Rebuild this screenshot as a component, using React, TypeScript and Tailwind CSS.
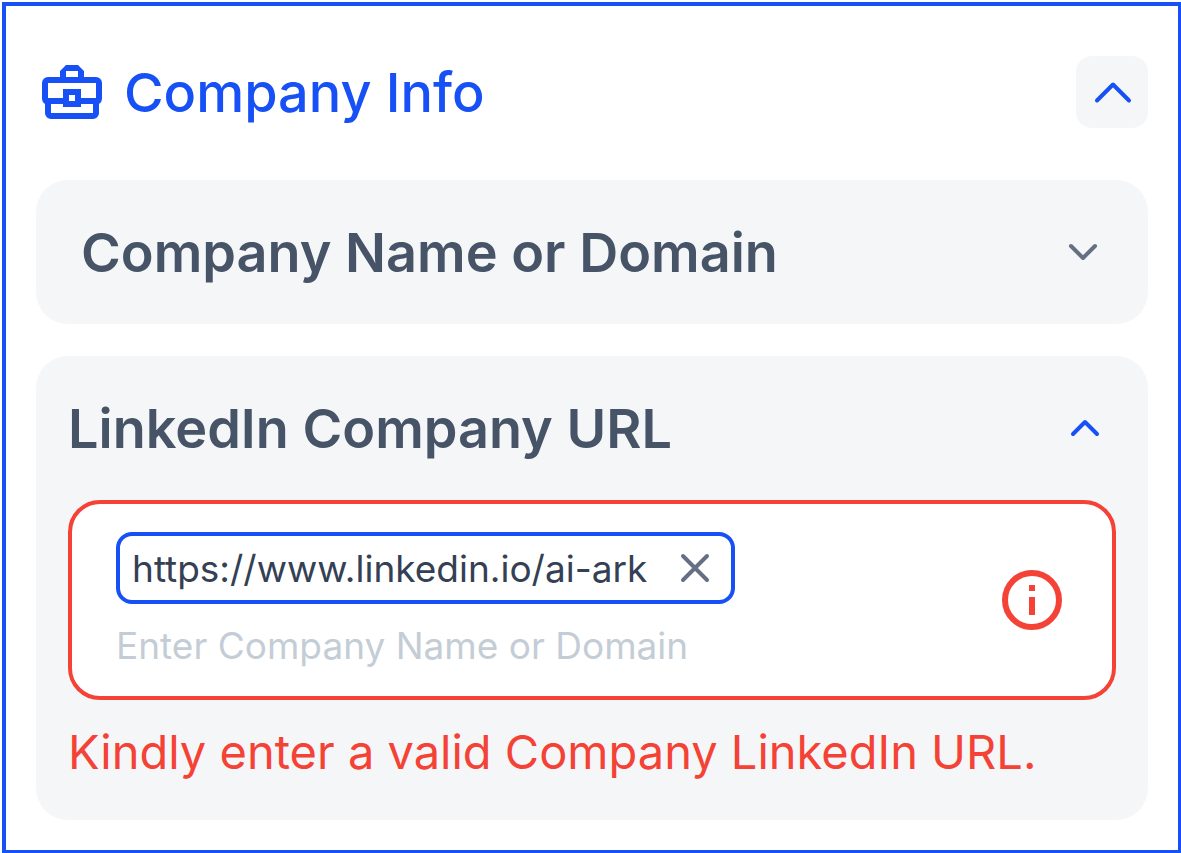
import { useState } from 'react';

function Briefcase() {
    return (
        <svg className="w-[60px] h-[54px] shrink-0" viewBox="0 0 60 54" fill="currentColor" aria-hidden="true">
            <path fillRule="evenodd" d="M18 12V6l6-6h12l6 6v6h12a6 6 0 0 1 6 6v16a6 6 0 0 1-3 5v9a6 6 0 0 1-6 6H9a6 6 0 0 1-6-6v-9a6 6 0 0 1-3-5V18a6 6 0 0 1 6-6zM24 6v6h12V6zM6 18v15h15v-9h18v9h15V18zM27 30v6h6v-6zM9 39v9h42v-9H39v3H21v-3z" />
        </svg>
    );
}

function Chevron({ className, d }: { className: string; d: string }) {
    return (
        <svg className={className} viewBox="0 0 40 24" fill="none" stroke="currentColor" strokeWidth="4" strokeLinecap="round" strokeLinejoin="round" aria-hidden="true">
            <path d={d} />
        </svg>
    );
}

export default function App() {
    const [urls, setUrls] = useState<string[]>(['https://www.linkedin.io/ai-ark']);

    return (
        <div className="bg-white pt-[2px] pl-[2px] font-['Inter',sans-serif]">
            <main className="border-4 border-r-[3px] border-b-[3px] border-[#1751f5] px-[30px] pt-[50px] pb-[30px]">
                <header className="flex items-center justify-between mb-[52px] text-[#1751f5]">
                    <div className="flex items-center gap-[22px] pl-[6px]">
                        <Briefcase />
                        <h1 className="pt-[2px] text-[54px] leading-[70px] font-medium">Company Info</h1>
                    </div>
                    <button type="button" aria-label="Collapse company info" className="flex size-[72px] items-center justify-center rounded-2xl bg-[#f4f6f8]">
                        <Chevron className="w-10 h-6" d="M5 20.5 21 4.500l16 16" />
                    </button>
                </header>

                <section className="mb-8 rounded-[32px] bg-[#f4f6f8]">
                    <button type="button" className="flex h-[144px] w-full items-center justify-between pl-[45px] pr-[45px] text-left">
                        <span className="pt-[2px] text-[54px] leading-[70px] font-semibold text-[#475467]">Company Name or Domain</span>
                        <Chevron className="w-10 h-6 text-[#667085]" d="M8 6l12 12L32 6" />
                    </button>
                </section>

                <section className="rounded-[32px] bg-[#f4f6f8] px-8 pb-8">
                    <button type="button" className="flex h-[144px] w-full items-center justify-between pr-[11px] text-left">
                        <span className="pt-[2px] text-[54px] leading-[70px] font-semibold text-[#475467]">LinkedIn Company URL</span>
                        <Chevron className="w-10 h-6 text-[#1751f5]" d="M8 18 20 6l12 12" />
                    </button>
                    <div className="flex items-center justify-between rounded-[32px] border-4 border-[#f44336] bg-white py-7 pl-11 pr-[50px]">
                        <div className="flex flex-1 flex-col items-start gap-4">
                            {urls.map((url) => (
                                <span key={url} className="flex h-[72px] items-center gap-8 rounded-2xl border-4 border-[#1751f5] pl-3 pr-5 text-[37px] text-[#344054]">
                                    <span className="pt-[2px]">{url}</span>
                                    <button type="button" aria-label="Remove URL" onClick={() => setUrls(urls.filter((u) => u !== url))}>
                                        <svg className="size-8" viewBox="0 0 32 32" fill="none" stroke="#667085" strokeWidth="4" strokeLinecap="round" aria-hidden="true">
                                            <path d="M4 4l24 24M28 4 4 28" />
                                        </svg>
                                    </button>
                                </span>
                            ))}
                            <input type="text" aria-label="LinkedIn Company URL" aria-describedby="url-error" placeholder="Enter Company Name or Domain" className="h-12 w-full pt-1 text-[37px] outline-none placeholder:text-[#c4cdd5]" />
                        </div>
                        <svg className="size-[60px] shrink-0" viewBox="0 0 60 60" aria-hidden="true">
                            <circle cx="30" cy="30" r="27" fill="none" stroke="#f44336" strokeWidth="6" />
                            <path d="M27 15h6v6h-6zM27 27h6v18h-6z" fill="#f44336" />
                        </svg>
                    </div>
                    <p id="url-error" className="mt-4 text-[47px] leading-[72px] text-[#f44336]">Kindly enter a valid Company LinkedIn URL.</p>
                </section>
            </main>
        </div>
    );
}
